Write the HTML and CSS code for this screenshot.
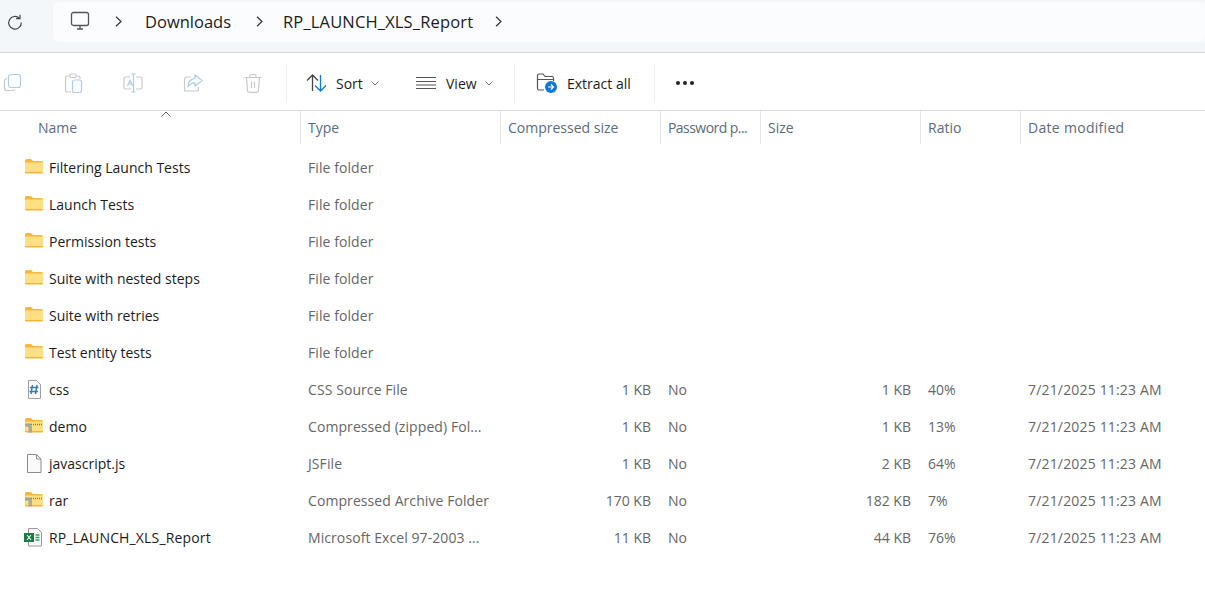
FILE: index.html
```html
<!DOCTYPE html>
<html lang="en">

<head>
    <meta charset="UTF-8">
    <title>RP_LAUNCH_XLS_Report</title>
    <link rel="stylesheet" href="styles.css">
</head>

<body>

    <svg width="0" height="0" class="defs">
        <symbol id="folder" viewBox="0 0 20 16">
            <path d="M1 2.500A1.500 1.500 0 0 1 2.500 1h4.500l2 2h8.500A1.500 1.500 0 0 1 19 4.500V6H1z" fill="#f6b73c"/>
            <path d="M1 4.500h18v9a1 1 0 0 1-1 1H2a1 1 0 0 1-1-1z" fill="#ffdf83"/>
            <path d="M1 14h18v.5a1 1 0 0 1-1 1H2a1 1 0 0 1-1-1z" fill="#f0b53a"/>
        </symbol>
        <symbol id="zip" viewBox="0 0 20 16">
            <path d="M1 2.500A1.500 1.500 0 0 1 2.500 1h4.500l2 2h8.500A1.500 1.500 0 0 1 19 4.500V6H1z" fill="#f6b73c"/>
            <path d="M1 4.500h18v9a1 1 0 0 1-1 1H2a1 1 0 0 1-1-1z" fill="#ffdf83"/>
            <path d="M1 14h18v.5a1 1 0 0 1-1 1H2a1 1 0 0 1-1-1z" fill="#f0b53a"/>
            <path d="M7 7.500h12" stroke="#77796f" stroke-width="1.600" stroke-dasharray="1 1"/>
            <rect x="1" y="6.500" width="6" height="3" fill="#a3a697"/>
            <rect x="4.500" y="9" width="3.500" height="6.500" fill="#a9a99c"/>
        </symbol>
    </svg>

    <div class="address-bar">
        <svg class="refresh" width="18" height="18" viewBox="0 0 18 18" fill="none" stroke="#444" stroke-width="1.200">
            <path d="M13.400 5.200A6.300 6.300 0 1 0 15.300 9.500"/>
            <path d="M14 1.800v3.900h-3.900"/>
        </svg>
        <div class="crumbs">
            <svg class="pc" width="20" height="20" viewBox="0 0 20 20" fill="none" stroke="#555" stroke-width="1.300">
                <rect x="1.500" y="1.500" width="17" height="13" rx="2"/>
                <path d="M7 18h6M10 14.500V18"/>
            </svg>
            <svg class="chev" width="7" height="11" viewBox="0 0 7 11" fill="none" stroke="#333" stroke-width="1.200"><path d="M1 .8l5 4.700-5 4.700"/></svg>
            <span class="crumb downloads">Downloads</span>
            <svg class="chev" width="7" height="11" viewBox="0 0 7 11" fill="none" stroke="#333" stroke-width="1.200"><path d="M1 .8l5 4.700-5 4.700"/></svg>
            <span class="crumb report">RP_LAUNCH_XLS_Report</span>
            <svg class="chev" width="7" height="11" viewBox="0 0 7 11" fill="none" stroke="#333" stroke-width="1.200"><path d="M1 .8l5 4.700-5 4.700"/></svg>
        </div>
    </div>

    <div class="toolbar">
        <div class="tool-group faded">
            <svg width="20" height="20" viewBox="0 0 20 20" fill="none" stroke-width="1.200">
                <path d="M4 5.500A2.500 2.500 0 0 0 1.500 8v7A2.500 2.500 0 0 0 4 17.500h6a2.500 2.500 0 0 0 2-1" stroke="#c9c9c9"/>
                <rect x="5.500" y="1.500" width="12" height="13" rx="2.500" stroke="#a9cdf0"/>
            </svg>
            <svg width="20" height="20" viewBox="0 0 20 20" fill="none" stroke-width="1.200">
                <path d="M7 3H4.500A2 2 0 0 0 2.500 5v12a2 2 0 0 0 2 2H8M15 3h-2M15 3a2 2 0 0 1 2 2v1" stroke="#c9c9c9"/>
                <rect x="7" y="1" width="6" height="3.500" rx="1" stroke="#c9c9c9"/>
                <rect x="9.500" y="7" width="9" height="12.500" rx="2" stroke="#a9cdf0"/>
            </svg>
            <svg width="20" height="20" viewBox="0 0 20 20" fill="none" stroke-width="1.200">
                <path d="M7 4H2.500A1.500 1.500 0 0 0 1 5.500v9A1.500 1.500 0 0 0 2.500 16H8M13 4h4.500A1.500 1.500 0 0 1 19 5.500v9a1.500 1.500 0 0 1-1.500 1.500H13" stroke="#c9c9c9"/>
                <path d="M10.500 1v18M8.500 1h4M8.500 19h4M4.500 13l2.500-6 2.500 6M5.400 11h3.200" stroke="#a9cdf0"/>
            </svg>
            <svg width="20" height="20" viewBox="0 0 20 20" fill="none" stroke-width="1.200">
                <path d="M8 4H3.500A2 2 0 0 0 1.500 6v10a2 2 0 0 0 2 2h10a2 2 0 0 0 2-2v-2" stroke="#c9c9c9"/>
                <path d="M12 2l7 5.500-7 5.500v-3.200c-3.500 0-5.500 1.400-7 3.700 0-4.500 2.500-7.500 7-7.800z" stroke="#a9cdf0"/>
            </svg>
            <svg width="20" height="20" viewBox="0 0 20 20" fill="none" stroke="#c9c9c9" stroke-width="1.200">
                <path d="M1.500 4.500h17M7 4.500V3a1.500 1.500 0 0 1 1.500-1.500h3A1.500 1.500 0 0 1 13 3v1.500M3.500 4.500l1 13a2 2 0 0 0 2 1.800h7a2 2 0 0 0 2-1.800l1-13M8.500 8.500v6.500M11.500 8.500v6.500"/>
            </svg>
        </div>
        <div class="tool-sep"></div>
        <div class="tool-btn sort">
            <svg width="22" height="20" viewBox="0 0 22 20" fill="none" stroke-width="1.300">
                <path d="M6.500 18V2M1 7.500l5.500-5.500L12 7.500" stroke="#444"/>
                <path d="M14.500 2v16M9 12.500l5.500 5.500 5.500-5.500" stroke="#0f78d4"/>
            </svg>
            <span>Sort</span>
            <svg class="caret" width="8" height="5" viewBox="0 0 8 5" fill="none" stroke="#777"><path d="M.5.500L4 4 7.500.500"/></svg>
        </div>
        <div class="tool-btn view">
            <svg width="20" height="14" viewBox="0 0 20 14" fill="none" stroke="#555" stroke-width="1.100">
                <path d="M0 1.500h20M0 5.500h20M0 9h20M0 12.500h20"/>
            </svg>
            <span>View</span>
            <svg class="caret" width="8" height="5" viewBox="0 0 8 5" fill="none" stroke="#777"><path d="M.5.500L4 4 7.500.500"/></svg>
        </div>
        <div class="tool-sep"></div>
        <div class="tool-btn extract">
            <svg width="22" height="22" viewBox="0 0 22 22" fill="none">
                <path d="M8 18H3a1.500 1.500 0 0 1-1.500-1.500v-13A1.500 1.500 0 0 1 3 2h4l2 2.500h7A1.500 1.500 0 0 1 17.500 6v3M1.500 7.500h16" stroke="#555" stroke-width="1.200"/>
                <circle cx="15" cy="15" r="6" fill="#0f78d4"/>
                <path d="M12 15h5.500M15 12.500l2.500 2.500-2.500 2.500" stroke="#fff" stroke-width="1.200"/>
            </svg>
            <span>Extract all</span>
        </div>
        <div class="tool-sep"></div>
        <div class="more"><i></i><i></i><i></i></div>
    </div>

    <div class="list-head">
        <svg class="sort-arrow" width="10" height="6" viewBox="0 0 10 6" fill="none" stroke="#666"><path d="M.5 5.500L5 1l4.500 4.500"/></svg>
        <div class="col first">Name</div>
        <div class="col">Type</div>
        <div class="col">Compressed size</div>
        <div class="col tight">Password p...</div>
        <div class="col">Size</div>
        <div class="col">Ratio</div>
        <div class="col wide">Date modified</div>
    </div>

    <div class="rows">
        <div class="row">
            <div class="name"><svg class="ficon" width="20" height="16"><use href="#folder"/></svg>Filtering Launch Tests</div>
            <div class="type">File folder</div>
        </div>
        <div class="row">
            <div class="name"><svg class="ficon" width="20" height="16"><use href="#folder"/></svg>Launch Tests</div>
            <div class="type">File folder</div>
        </div>
        <div class="row">
            <div class="name"><svg class="ficon" width="20" height="16"><use href="#folder"/></svg>Permission tests</div>
            <div class="type">File folder</div>
        </div>
        <div class="row">
            <div class="name"><svg class="ficon" width="20" height="16"><use href="#folder"/></svg>Suite with nested steps</div>
            <div class="type">File folder</div>
        </div>
        <div class="row">
            <div class="name"><svg class="ficon" width="20" height="16"><use href="#folder"/></svg>Suite with retries</div>
            <div class="type">File folder</div>
        </div>
        <div class="row">
            <div class="name"><svg class="ficon" width="20" height="16"><use href="#folder"/></svg>Test entity tests</div>
            <div class="type">File folder</div>
        </div>
        <div class="row">
            <div class="name">
                <svg class="ficon doc" width="20" height="20" viewBox="0 0 20 20" fill="none">
                    <path d="M4.500 1.500h8l4 4v14h-12z" fill="#fafafa" stroke="#a0a0a0"/>
                    <path d="M8.500 6l-1.500 9M13 6l-1.500 9M6 8.500h8.500M5.500 12.500h8.500" stroke="#3d7ea6" stroke-width="1.500"/>
                </svg>css
            </div>
            <div class="type">CSS Source File</div>
            <div class="num">1 KB</div>
            <div class="pw">No</div>
            <div class="num">1 KB</div>
            <div class="ratio">40%</div>
            <div class="date">7/21/2025 11:23 AM</div>
        </div>
        <div class="row">
            <div class="name"><svg class="ficon" width="20" height="16"><use href="#zip"/></svg>demo</div>
            <div class="type">Compressed (zipped) Fol...</div>
            <div class="num">1 KB</div>
            <div class="pw">No</div>
            <div class="num">1 KB</div>
            <div class="ratio">13%</div>
            <div class="date">7/21/2025 11:23 AM</div>
        </div>
        <div class="row">
            <div class="name">
                <svg class="ficon doc" width="20" height="20" viewBox="0 0 20 20" fill="none">
                    <path d="M3.500 1.500h9l4.500 4.500v13.500h-13.500z" fill="#fafafa" stroke="#8c8c8c"/>
                    <path d="M12.500 1.500v4.500h4.500" stroke="#8c8c8c"/>
                </svg>javascript.js
            </div>
            <div class="type">JSFile</div>
            <div class="num">1 KB</div>
            <div class="pw">No</div>
            <div class="num">2 KB</div>
            <div class="ratio">64%</div>
            <div class="date">7/21/2025 11:23 AM</div>
        </div>
        <div class="row">
            <div class="name"><svg class="ficon" width="20" height="16"><use href="#zip"/></svg>rar</div>
            <div class="type">Compressed Archive Folder</div>
            <div class="num">170 KB</div>
            <div class="pw">No</div>
            <div class="num">182 KB</div>
            <div class="ratio">7%</div>
            <div class="date">7/21/2025 11:23 AM</div>
        </div>
        <div class="row">
            <div class="name spaced">
                <svg class="ficon doc" width="20" height="20" viewBox="0 0 20 20" fill="none">
                    <path d="M4.500 1.500h9l4 4v13.500h-13z" fill="#fafafa" stroke="#999"/>
                    <rect x="0" y="6" width="10" height="9" fill="#1d7a45"/>
                    <path d="M3 8l4 5M7 8l-4 5" stroke="#fff" stroke-width="1.100"/>
                    <path d="M11.500 8h4M11.500 10.500h4M11.500 13h4" stroke="#3f9a66" stroke-width="1.300"/>
                </svg>RP_LAUNCH_XLS_Report
            </div>
            <div class="type">Microsoft Excel 97-2003 ...</div>
            <div class="num">11 KB</div>
            <div class="pw">No</div>
            <div class="num">44 KB</div>
            <div class="ratio">76%</div>
            <div class="date">7/21/2025 11:23 AM</div>
        </div>
    </div>

</body>

</html>
```

FILE: styles.css
```css
body {
    font-family: "Open Sans", "Noto Sans", sans-serif;
    font-size: 14px;
    background-color: #ffffff;
    color: #1c1c1c;
    margin: 0;
    overflow: hidden;
}

.defs {
    display: block;
    height: 0;
}

/* Address bar */
.address-bar {
    height: 53px;
    box-sizing: border-box;
    display: flex;
    align-items: flex-start;
    background-color: #f4f7fa;
    border-bottom: 1px solid #ced6de;
}

.refresh {
    margin: 13px 0 0 6px;
}

.crumbs {
    width: 1152px;
    height: 40px;
    margin: 2px 0 0 29px;
    padding: 0 0 2px 17px;
    box-sizing: border-box;
    display: flex;
    align-items: center;
    background-color: #fbfcfd;
    border-radius: 6px;
    font-size: 16.500px;
}

.pc {
    margin-right: 25px;
}

.crumb.downloads {
    margin: 0 25px 0 23px;
}

.crumb.report {
    margin: 0 22px 0 20px;
    letter-spacing: .15px;
}

/* Toolbar */
.toolbar {
    height: 58px;
    box-sizing: border-box;
    padding-top: 3px;
    display: flex;
    align-items: center;
    border-bottom: 1px solid #d5dadf;
}

.tool-group {
    display: flex;
    gap: 40px;
    padding-left: 3px;
    width: 286px;
    box-sizing: border-box;
}

.tool-sep {
    width: 1px;
    height: 40px;
    background-color: #eeeeee;
}

.tool-btn {
    display: flex;
    align-items: center;
    font-size: 14px;
}

.tool-btn.sort {
    padding-left: 19px;
    width: 109px;
    box-sizing: border-box;
}

.tool-btn.sort span {
    margin: 0 8px 0 8px;
}

.tool-btn.view {
    padding-left: 20px;
    width: 118px;
    box-sizing: border-box;
}

.tool-btn.view span {
    margin: 0 8px 0 10px;
}

.tool-btn.extract {
    padding-left: 21px;
    width: 139px;
    box-sizing: border-box;
}

.tool-btn.extract span {
    margin-left: 9px;
}

.more {
    display: flex;
    gap: 3px;
    margin-left: 21px;
}

.more i {
    width: 4px;
    height: 4px;
    border-radius: 50%;
    background-color: #222;
}

/* Column headers */
.list-head {
    position: relative;
    display: grid;
    grid-template-columns: 300px 200px 160px 100px 160px 100px 1fr;
    height: 33px;
    margin-bottom: 5px;
    color: #5b6b7c;
}

.sort-arrow {
    position: absolute;
    left: 161px;
    top: 0;
}

.col {
    display: flex;
    align-items: center;
    padding-left: 7px;
    border-left: 1px solid #e5e5e5;
}

.col.first {
    padding-left: 38px;
    border-left: none;
}

.col.tight {
    letter-spacing: -.55px;
}

.col.wide {
    letter-spacing: .3px;
}

/* File rows */
.row {
    display: grid;
    grid-template-columns: 300px 200px 160px 100px 160px 100px 1fr;
    height: 37px;
    align-items: center;
    color: #666666;
}

.name {
    display: flex;
    align-items: center;
    padding-left: 24px;
    color: #1c1c1c;
}

.name.spaced {
    letter-spacing: .15px;
}

.ficon {
    margin: 0 5px 3px 0;
}

.ficon.doc {
    margin-bottom: 2px;
}

.type,
.pw,
.ratio,
.date {
    padding-left: 8px;
}

.type {
    letter-spacing: .08px;
}

.date {
    letter-spacing: .17px;
}

.num {
    text-align: right;
    padding-right: 9px;
}
```
